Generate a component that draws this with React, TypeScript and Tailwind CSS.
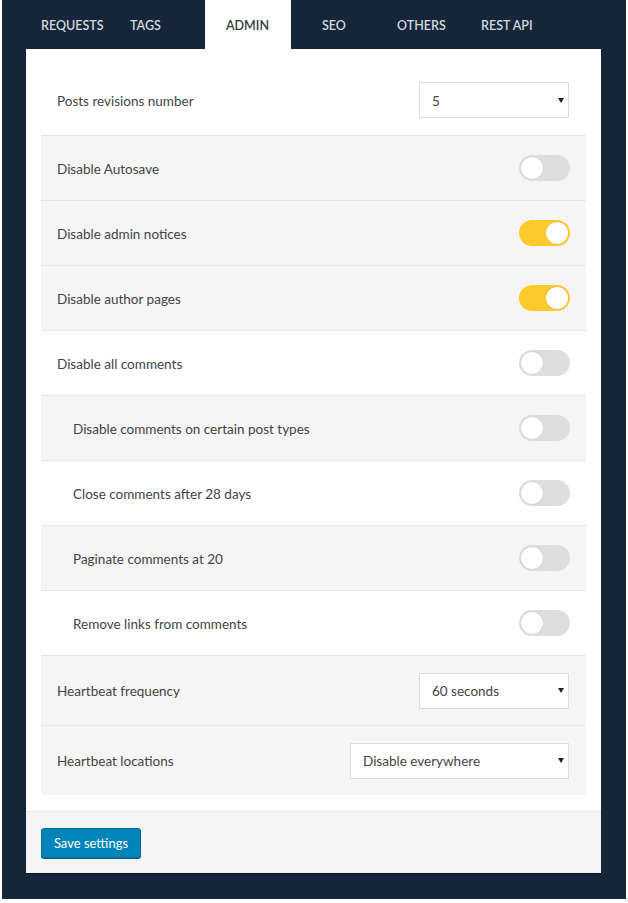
import React from "react";

type Row =
  | { kind: "toggle"; label: string; on: boolean; bg: boolean; indent?: boolean }
  | { kind: "select"; label: string; value: string; width: string; bg: boolean };

const rows: Row[] = [
  { kind: "toggle", label: "Disable Autosave", on: false, bg: true },
  { kind: "toggle", label: "Disable admin notices", on: true, bg: true },
  { kind: "toggle", label: "Disable author pages", on: true, bg: true },
  { kind: "toggle", label: "Disable all comments", on: false, bg: false },
  { kind: "toggle", label: "Disable comments on certain post types", on: false, bg: true, indent: true },
  { kind: "toggle", label: "Close comments after 28 days", on: false, bg: false, indent: true },
  { kind: "toggle", label: "Paginate comments at 20", on: false, bg: true, indent: true },
  { kind: "toggle", label: "Remove links from comments", on: false, bg: false, indent: true },
  { kind: "select", label: "Heartbeat frequency", value: "60 seconds", width: "w-[150px]", bg: true },
  { kind: "select", label: "Heartbeat locations", value: "Disable everywhere", width: "w-[219px]", bg: true },
];

const tabs = [
  { name: "REQUESTS", box: "w-[91px] pl-[15px]" },
  { name: "TAGS", box: "w-[88px] pl-[13px]" },
  { name: "ADMIN", box: "w-[86px] pl-[21px] bg-white text-[#333b42]" },
  { name: "SEO", box: "w-[85px] pl-[31px]" },
  { name: "OTHERS", box: "w-[90px] pl-[21px]" },
  { name: "REST API", box: "w-[90px] pl-[15px]" },
];

function Arrow() {
  return (
    <svg width="6" height="5" viewBox="0 0 6 5" className="shrink-0">
      <path d="M0 0 L6 0 L3 5 Z" fill="#222" />
    </svg>
  );
}

function Select({ value, width }: { value: string; width: string }) {
  return (
    <div
      className={`${width} h-[36px] bg-white border border-[#dcdcdc] flex items-center justify-between pl-[12px] pr-[4px] text-[13.5px] text-[#444]`}
    >
      <span className="pt-[2px]">{value}</span>
      <Arrow />
    </div>
  );
}

function Toggle({ on }: { on: boolean }) {
  return (
    <div
      className={`w-[51px] h-[26px] rounded-full flex items-center px-[2px] ${
        on ? "bg-[#fdca2b] justify-end" : "bg-[#dedede] justify-start"
      }`}
    >
      <div className="w-[22px] h-[22px] rounded-full bg-white shadow-[0_0_1px_rgba(0,0,0,0.25)]" />
    </div>
  );
}

export default function App() {
  return (
    <div className="w-[628px] min-h-[903px] bg-white px-[2px] pb-[2px] font-['Lato',sans-serif]">
      <div className="bg-[#15263a] pl-[24px] pr-[25px] pb-[26px]">
        <div className="flex h-[49px]">
          {tabs.map((t) => (
            <div
              key={t.name}
              className={`${t.box} h-full flex items-center pt-[3px] text-[12.5px] font-semibold ${
                t.name === "ADMIN" ? "" : "text-[#d3d8de]"
              }`}
            >
              {t.name}
            </div>
          ))}
        </div>

        <div className="bg-white shadow-[0_1px_1px_rgba(0,0,0,0.5)]">
          <div className="px-[15px] pt-[16px] pb-[16px]">
            <div className="h-[70px] flex items-center justify-between pl-[16px] pr-[17px] text-[13.5px] text-[#444]">
              <span className="pt-[2px]">Posts revisions number</span>
              <Select value="5" width="w-[150px]" />
            </div>
            {rows.map((r) => (
              <div
                key={r.label}
                className={`border-t border-[#e6e6e6] flex items-center justify-between text-[13.5px] text-[#444] ${
                  r.bg ? "bg-[#f5f5f5]" : "bg-white"
                } ${r.kind === "select" ? "h-[70px] pr-[17px]" : "h-[65px] pr-[16px]"} ${
                  r.kind === "toggle" && r.indent ? "pl-[32px]" : "pl-[16px]"
                }`}
              >
                <span className="pt-[2px]">{r.label}</span>
                {r.kind === "toggle" ? <Toggle on={r.on} /> : <Select value={r.value} width={r.width} />}
              </div>
            ))}
          </div>
          <div className="border-t border-[#e6e6e6] bg-[#f5f5f5] px-[15px] pt-[16px] pb-[15px]">
            <button className="h-[30px] w-[100px] rounded-[3px] bg-[#0085ba] border border-[#006a95] text-white text-[13px] pt-[1px] shadow-[0_1px_0_#006799]">
              Save settings
            </button>
          </div>
        </div>
      </div>
    </div>
  );
}
